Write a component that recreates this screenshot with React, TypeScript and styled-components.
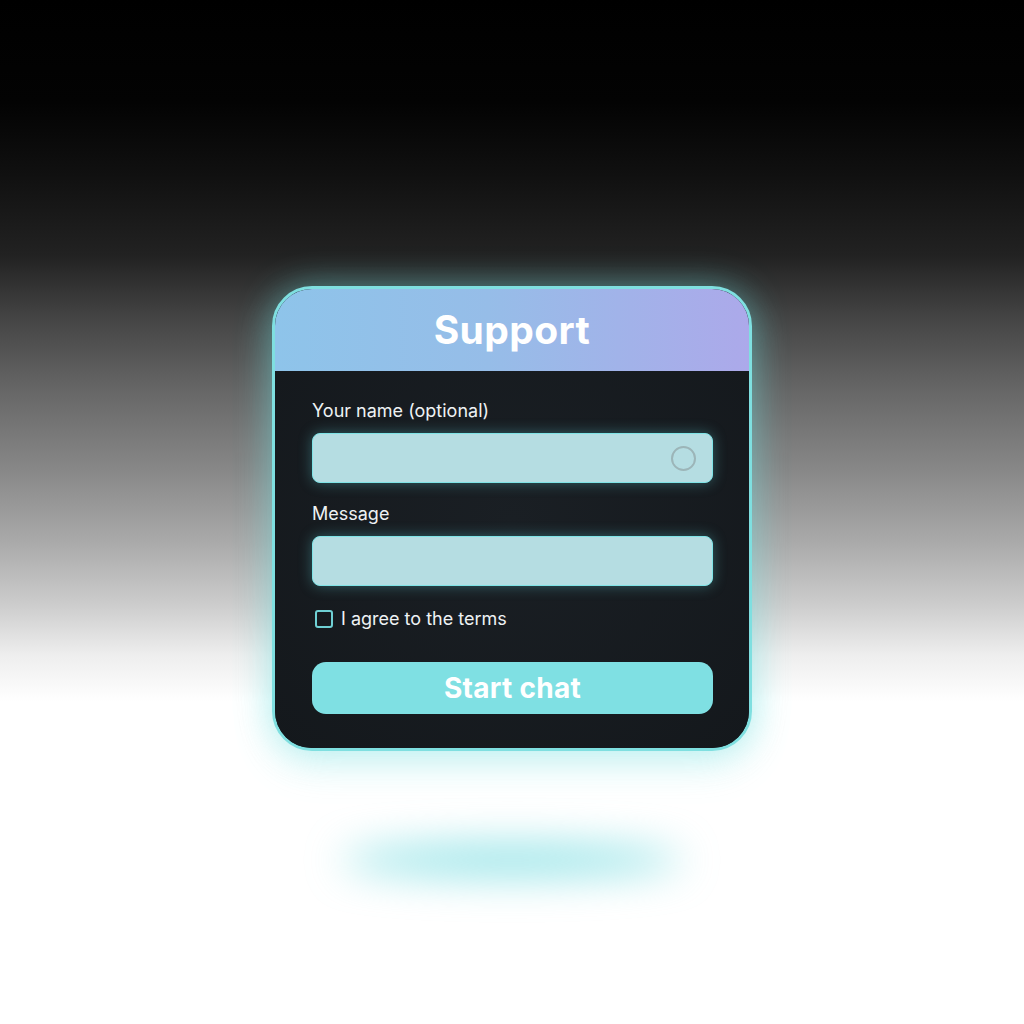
import styled, { createGlobalStyle } from "styled-components";
import React from "react";

const Global = createGlobalStyle`
  html, body {
    margin: 0;
    padding: 0;
  }
  body {
    font-family: Inter, "Noto Sans", "Liberation Sans", sans-serif;
  }
`;

const App = () => {
  return (
    <>
      <Global />
      <Page>
        <Card>
          <Header>
            <Title>Support</Title>
          </Header>
          <Body>
            <Field>
              <Label>Your name (optional)</Label>
              <InputBox>
                <Spinner />
              </InputBox>
            </Field>
            <Field>
              <Label>Message</Label>
              <InputBox />
            </Field>
            <CheckRow>
              <Check />
              <CheckText>I agree to the terms</CheckText>
            </CheckRow>
            <Button>Start chat</Button>
          </Body>
        </Card>
        <FloorShadow />
      </Page>
    </>
  );
};

export default App;

const Page = styled.div`
  width: 1024px;
  height: 1024px;
  display: flex;
  flex-direction: column;
  align-items: center;
  padding-top: 286px;
  box-sizing: border-box;
  overflow: hidden;
  background: linear-gradient(
    180deg,
    #000 0%,
    #030303 10%,
    #101010 17%,
    #222 25%,
    #444 31%,
    #666 38%,
    #888 46%,
    #aaa 53%,
    #ccc 59%,
    #eee 64%,
    #fff 68.5%,
    #fff 100%
  );
`;

const Card = styled.div`
  width: 480px;
  height: 465px;
  box-sizing: border-box;
  border: 3px solid #7fdfe0;
  border-radius: 40px;
  overflow: hidden;
  background: #161a1e;
  display: flex;
  flex-direction: column;
  box-shadow: 0 0 36px rgba(110, 225, 225, 0.45), 0 14px 40px rgba(110, 225, 225, 0.2);
`;

const Header = styled.div`
  height: 82px;
  flex-shrink: 0;
  display: flex;
  align-items: center;
  justify-content: center;
  background: linear-gradient(90deg, #8ec4ea 0%, #96bde8 45%, #aca9ea 100%);
`;

const Title = styled.h1`
  margin: 0;
  color: #fff;
  font-size: 39px;
  font-weight: 700;
  letter-spacing: 0.4px;
  font-family: Inter, "Liberation Sans", sans-serif;
  transform: translateY(-1px);
`;

const Body = styled.div`
  flex: 1;
  display: flex;
  flex-direction: column;
  padding: 28px 36px 0 37px;
  background: radial-gradient(ellipse at 50% 40%, #1a1f24 0%, #14181c 100%);
`;

const Field = styled.div`
  display: flex;
  flex-direction: column;
  margin-bottom: 19px;
`;

const Label = styled.div`
  color: #eef2f4;
  font-size: 18px;
  line-height: 24px;
  margin-bottom: 10px;
`;

const InputBox = styled.div`
  height: 50px;
  border-radius: 8px;
  background: #b5dde2;
  border: 1.5px solid #7fe3e6;
  box-sizing: border-box;
  display: flex;
  align-items: center;
  justify-content: flex-end;
  padding-right: 16px;
  box-shadow: 0 0 14px rgba(100, 220, 225, 0.35);
`;

const Spinner = styled.div`
  width: 25px;
  height: 25px;
  box-sizing: border-box;
  border-radius: 50%;
  border: 2px solid #9cb5b8;
`;

const CheckRow = styled.div`
  display: flex;
  align-items: center;
  gap: 8px;
  padding-left: 3px;
  margin-top: 2px;
`;

const Check = styled.div`
  width: 18px;
  height: 18px;
  box-sizing: border-box;
  border: 2px solid #6fd0d4;
  border-radius: 3px;
`;

const CheckText = styled.span`
  color: #eef2f4;
  font-size: 18px;
  line-height: 24px;
`;

const Button = styled.div`
  margin-top: 31px;
  height: 52px;
  border-radius: 14px;
  background: #7fe0e3;
  display: flex;
  align-items: center;
  justify-content: center;
  color: #fff;
  font-size: 28px;
  font-weight: 700;
  letter-spacing: 0.3px;
`;

const FloorShadow = styled.div`
  margin-top: 94px;
  width: 340px;
  height: 30px;
  border-radius: 50%;
  background: rgba(100, 215, 220, 0.75);
  filter: blur(20px);
`;
